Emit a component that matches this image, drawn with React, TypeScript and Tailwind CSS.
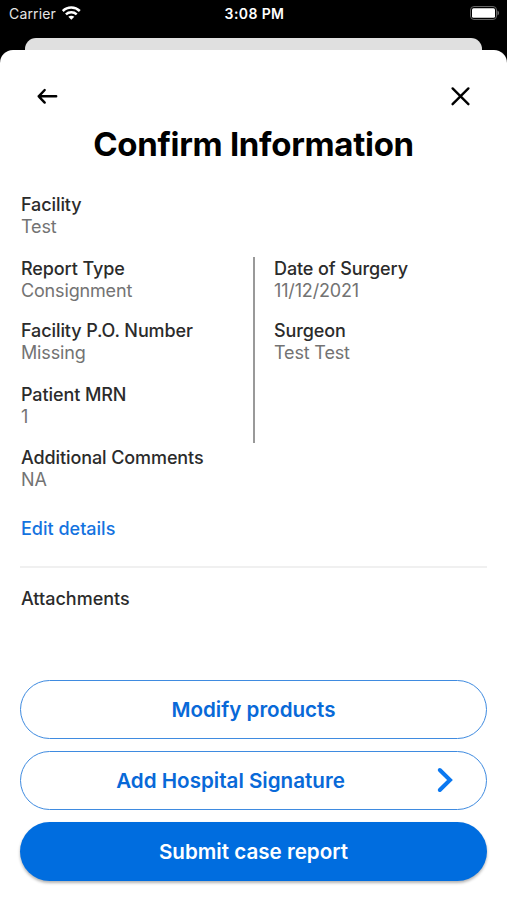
type FieldProps = {
    label: string;
    value: string;
    className?: string;
};

function Field({ label, value, className = "" }: FieldProps) {
    return (
        <div className={`text-[18px] leading-[22px] whitespace-nowrap ${className}`}>
            <p className="font-medium text-[#2b2b2b] tracking-[-0.1px]">{label}</p>
            <p className="text-[#737373] tracking-[-0.16px]">{value}</p>
        </div>
    );
}

function StatusBar() {
    return (
        <div className="h-[38px] pl-[9px] pr-[7px] flex justify-between text-white leading-[28px]">
            <div className="flex-1 flex items-center gap-[6px] h-[28px] text-[14px] text-[#e5e5e5]">
                <span className="tracking-[0.15px]">Carrier</span>
                <svg className="-mt-[2px]" width="19" height="14" viewBox="0 0 19 14" fill="none" stroke="white" strokeWidth="2.5">
                    <path d="M.8 5C5.5 .4 13.1 .4 17.8 5" />
                    <path d="M3.9 8.4c3-2.8 7.8-2.8 10.8 0" />
                    <path d="M6.3 10.8 9.3 13.8l3-3c-1.7-1.5-4.3-1.5-6 0Z" fill="white" stroke="none" />
                </svg>
            </div>
            <p className="text-center text-[14px] font-semibold whitespace-nowrap tracking-[0.4px]">3:08 PM</p>
            <div className="flex-1 flex justify-end items-center h-[26px]">
                <svg width="31" height="14" viewBox="0 0 31 14">
                    <rect x="1.5" y=".5" width="26" height="13" rx="3.5" fill="none" stroke="#666" />
                    <rect x="3" y="2.3" width="23" height="9.4" rx="1.5" fill="white" />
                    <path d="M28.5 4.5v5c2-1 2-4 0-5Z" fill="#777" />
                </svg>
            </div>
        </div>
    );
}

export default function App() {
    return (
        <div className="w-[507px] h-[900px] overflow-hidden bg-black font-['Inter',sans-serif] flex flex-col">
            <StatusBar />
            <div className="h-[12px] mx-[25px] rounded-t-[11px] bg-[#e0e0e0] shrink-0" />
            <main className="flex-1 bg-white rounded-t-[13px] px-[20px] flex flex-col">
                <div className="flex justify-between px-[16px] pt-[35px]">
                    <svg width="22" height="22" viewBox="0 0 22 22" fill="none" stroke="black" strokeWidth="2.4" strokeLinecap="round" strokeLinejoin="round">
                        <path d="M20.2 11.3H2.7M8.7 5l-6 6.3 6 6.3" />
                    </svg>
                    <svg width="22" height="22" viewBox="0 0 22 22" fill="none" stroke="black" strokeWidth="2.4" strokeLinecap="round">
                        <path d="m3.6 3.4 15.8 15.8M19.4 3.4 3.6 19.2" />
                    </svg>
                </div>
                <h1 className="mt-[16px] text-center text-[33px] leading-[42px] font-bold text-black tracking-[-0.3px]">
                    Confirm Information
                </h1>
                <Field label="Facility" value="Test" className="mt-[29px] pl-[1px]" />
                <div className="mt-[19px] h-[186px] flex">
                    <div className="w-[232.5px] pl-[1px] pt-[1px] flex flex-col gap-[19px]">
                        <Field label="Report Type" value="Consignment" />
                        <Field label="Facility P.O. Number" value="Missing" className="-mt-[1px]" />
                        <Field label="Patient MRN" value="1" className="mt-[1px]" />
                    </div>
                    <div className="w-[2.5px] bg-[#999]" />
                    <div className="pl-[19px] pt-[1px] flex flex-col gap-[18px]">
                        <Field label="Date of Surgery" value="11/12/2021" />
                        <Field label="Surgeon" value="Test Test" />
                    </div>
                </div>
                <Field label="Additional Comments" value="NA" className="mt-[4px] pl-[1px]" />
                <button className="mt-[27px] ml-[1px] self-start text-[18px] leading-[22px] font-medium text-[#1473df]">Edit details</button>
                <hr className="mt-[26px] border-0 h-[2px] bg-[#f0f0f0]" />
                <h2 className="mt-[20px] ml-[1px] text-[18px] leading-[22px] font-medium text-[#2b2b2b]">Attachments</h2>
                <div className="mt-[70px] flex flex-col gap-[12px] text-[20.6px] font-semibold text-[#0869d8]">
                    <button className="h-[59px] pt-[2px] rounded-full border border-[#3f8be0]">Modify products</button>
                    <button className="relative h-[59px] pt-[2px] rounded-full border border-[#3f8be0] pr-[46px]">
                        Add Hospital Signature
                        <svg className="absolute right-[33px] top-[14px]" width="18" height="28" viewBox="0 0 18 28" fill="none" stroke="#0b78f0" strokeWidth="4" strokeLinecap="round">
                            <path d="M4.8 4 15 14 4.8 24" />
                        </svg>
                    </button>
                    <button className="h-[59px] pt-[2px] rounded-full bg-[#006ddf] text-white shadow-[0_2px_3px_rgba(0,0,0,0.3)]">Submit case report</button>
                </div>
            </main>
        </div>
    );
}
